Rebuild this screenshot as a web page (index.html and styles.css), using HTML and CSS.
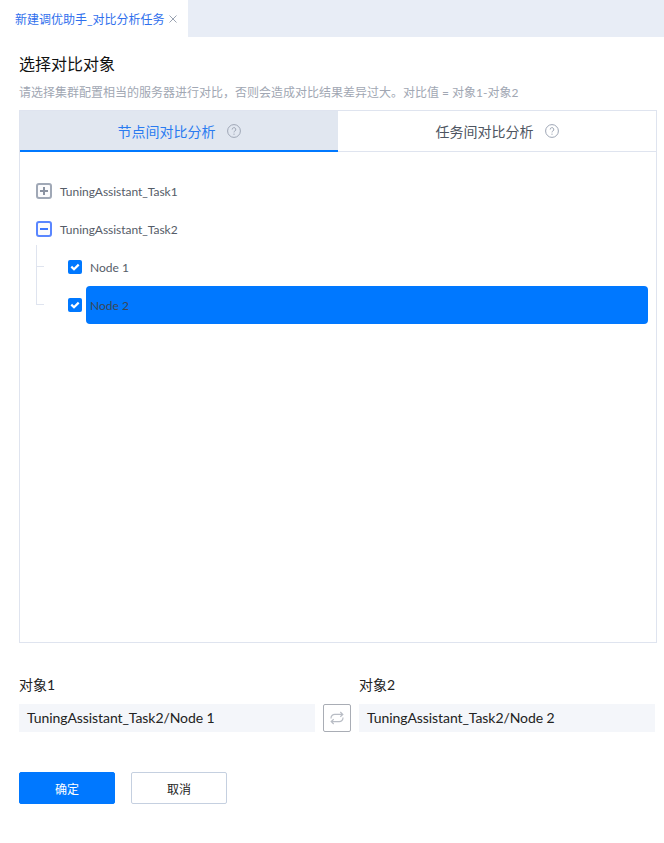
FILE: index.html
```html
<!doctype html>
<html>

<head>
  <title>新建调优助手</title>
  <meta name="viewport" content="width=device-width, initial-scale=1.0">
  <link rel="stylesheet" href="styles.css">
</head>

<body>
  <!-- Top tab bar -->
  <div class="tab-bar">
    <div class="page-tab">
      <span class="page-tab-name">新建调优助手_对比分析任务</span>
      <svg class="page-tab-close" width="8" height="8" viewBox="0 0 8 8">
        <path d="M.5.5l7 7M7.5.5l-7 7" stroke="#9aa3b2" stroke-width="1" fill="none" />
      </svg>
    </div>
  </div>

  <div class="content">
    <h1 class="title">选择对比对象</h1>
    <p class="hint">请选择集群配置相当的服务器进行对比，否则会造成对比结果差异过大。对比值 = 对象1-对象2</p>

    <div class="panel">
      <!-- Panel tabs -->
      <div class="panel-tabs">
        <div class="panel-tab active">
          <span>节点间对比分析</span>
          <svg class="help" width="14" height="14" viewBox="0 0 14 14">
            <circle cx="7" cy="7" r="6.4" />
            <path d="M5.2 5.5a1.8 1.8 0 1 1 2.7 1.5c-.6.4-.9.7-.9 1.4" />
            <path d="M7 9.6v1.2" />
          </svg>
        </div>
        <div class="panel-tab">
          <span>任务间对比分析</span>
          <svg class="help" width="14" height="14" viewBox="0 0 14 14">
            <circle cx="7" cy="7" r="6.4" />
            <path d="M5.2 5.5a1.8 1.8 0 1 1 2.7 1.5c-.6.4-.9.7-.9 1.4" />
            <path d="M7 9.6v1.2" />
          </svg>
        </div>
      </div>

      <!-- Tree -->
      <div class="tree">
        <div class="tree-row">
          <svg class="expander" width="16" height="16" viewBox="0 0 16 16">
            <rect x="1" y="1" width="14" height="14" rx="2" fill="#fbfbfd" stroke="#a0a8b6" stroke-width="2" />
            <path d="M4 8h8M8 4v8" stroke="#8a92a1" stroke-width="2" />
          </svg>
          <span class="tree-label">TuningAssistant_Task1</span>
        </div>
        <div class="tree-row">
          <svg class="expander" width="16" height="16" viewBox="0 0 16 16">
            <rect x="1" y="1" width="14" height="14" rx="2" fill="#fbfbfd" stroke="#5a86ff" stroke-width="2" />
            <path d="M4 8h8" stroke="#3d76ff" stroke-width="2" />
          </svg>
          <span class="tree-label">TuningAssistant_Task2</span>
        </div>
        <div class="tree-children">
          <div class="tree-row child">
            <span class="check">
              <svg width="14" height="14" viewBox="0 0 14 14">
                <path d="M3.3 6.6l2.7 2.6 4.7-4.6" stroke="#fff" stroke-width="2.2" fill="none" />
              </svg>
            </span>
            <span class="node-label">Node 1</span>
          </div>
          <div class="tree-row child">
            <span class="check">
              <svg width="14" height="14" viewBox="0 0 14 14">
                <path d="M3.3 6.6l2.7 2.6 4.7-4.6" stroke="#fff" stroke-width="2.2" fill="none" />
              </svg>
            </span>
            <span class="node-label selected">Node 2</span>
          </div>
        </div>
      </div>
    </div>

    <!-- Compare objects -->
    <div class="objects">
      <div class="object">
        <div class="object-label">对象1</div>
        <div class="object-value">TuningAssistant_Task2/Node 1</div>
      </div>
      <button class="swap" type="button">
        <svg width="14" height="14" viewBox="0 0 14 14">
          <path d="M1 7.5C.9 5 2.6 3.4 4.8 3.4h8M10.3 1l2.5 2.4-2.5 2.4M13 6.5c.1 2.500-1.600 4.100-3.800 4.100h-8M3.700 8.200L1.200 10.600l2.500 2.400" />
        </svg>
      </button>
      <div class="object">
        <div class="object-label">对象2</div>
        <div class="object-value">TuningAssistant_Task2/Node 2</div>
      </div>
    </div>

    <div class="actions">
      <button class="button primary" type="button">确定</button>
      <button class="button" type="button">取消</button>
    </div>
  </div>
</body>

</html>
```

FILE: styles.css
```css
body {
  margin: 0;
  background-color: #fff;
  font-family: Lato, "Noto Sans CJK SC", sans-serif;
  color: #222;
}

.tab-bar {
  display: flex;
  height: 37px;
  background-color: #e8edf6;
}

.page-tab {
  display: flex;
  align-items: center;
  gap: 4px;
  width: 188px;
  box-sizing: border-box;
  padding-left: 15px;
  background-color: #fff;
  font-size: 12px;
  color: #2f6fed;
}

.content {
  padding: 0 7px 0 19px;
}

.title {
  margin: 16px 0 0;
  font-size: 16px;
  line-height: 21px;
  font-weight: 400;
  color: #111;
}

.hint {
  margin: 11px 0 0;
  font-size: 12px;
  line-height: 16px;
  color: #a1a7b3;
}

.panel {
  margin-top: 9px;
  height: 533px;
  box-sizing: border-box;
  border: 1px solid #dfe4ef;
}

.panel-tabs {
  display: flex;
  height: 40px;
  border-bottom: 1px solid #dfe4ef;
}

.panel-tab {
  flex: 1;
  display: flex;
  align-items: center;
  justify-content: center;
  gap: 11px;
  font-size: 14px;
  color: #4e5561;
}

/* active underline sits on top of the tabs border */
.panel-tab.active {
  height: 39px;
  background-color: #e1e7f0;
  border-bottom: 2px solid #0078ff;
  color: #2a7bf0;
}

.help {
  fill: none;
  stroke: #9ea6b5;
  stroke-width: 1;
}

.tree {
  padding-top: 20px;
}

.tree-row {
  display: flex;
  align-items: center;
  height: 38px;
  padding-left: 16px;
}

.expander {
  flex: none;
}

.tree-label {
  margin-left: 8px;
  font-size: 12px;
  letter-spacing: -0.03px;
  color: #555c68;
}

.tree-children {
  position: relative;
}

/* connector lines for the child nodes */
.tree-children::before {
  content: "";
  position: absolute;
  left: 16px;
  top: -3px;
  width: 7px;
  height: 59px;
  border-left: 1px solid #dfe4ef;
  border-bottom: 1px solid #dfe4ef;
}

.tree-children::after {
  content: "";
  position: absolute;
  left: 17px;
  top: 18px;
  width: 7px;
  border-top: 1px solid #dfe4ef;
}

.tree-row.child {
  padding-left: 48px;
}

.check {
  flex: none;
  display: flex;
  width: 14px;
  height: 14px;
  border-radius: 2px;
  background-color: #0078ff;
}

.node-label {
  flex: 1;
  display: flex;
  align-items: center;
  height: 38px;
  margin-left: 4px;
  margin-right: 8px;
  padding-left: 4px;
  border-radius: 4px;
  font-size: 12px;
  color: #555c68;
}

.node-label.selected {
  background-color: #0078ff;
  color: #3b4654;
}

.objects {
  display: flex;
  align-items: flex-end;
  gap: 8px;
  margin-top: 32px;
  padding-right: 2px;
}

.object {
  flex: 1;
}

.object-label {
  font-size: 14px;
  line-height: 19px;
  color: #222;
}

.object-value {
  margin-top: 10px;
  height: 28px;
  padding-left: 8px;
  background-color: #f4f6fa;
  font-size: 14px;
  letter-spacing: -0.07px;
  line-height: 28px;
  color: #222;
}

.swap {
  flex: none;
  display: flex;
  align-items: center;
  justify-content: center;
  width: 28px;
  height: 28px;
  padding: 0;
  background-color: #fff;
  border: 1px solid #a9adb5;
  border-radius: 2px;
}

.swap svg {
  fill: none;
  stroke: #b9bdc5;
  stroke-width: 1.2;
}

.actions {
  display: flex;
  gap: 16px;
  margin-top: 40px;
}

.button {
  width: 96px;
  height: 32px;
  padding: 0;
  background-color: #fff;
  border: 1px solid #c5d0e0;
  border-radius: 2px;
  font-family: Lato, "Noto Sans CJK SC", sans-serif;
  font-size: 12px;
  color: #222;
}

.button.primary {
  background-color: #0078ff;
  border-color: #0078ff;
  color: #fff;
}
```
